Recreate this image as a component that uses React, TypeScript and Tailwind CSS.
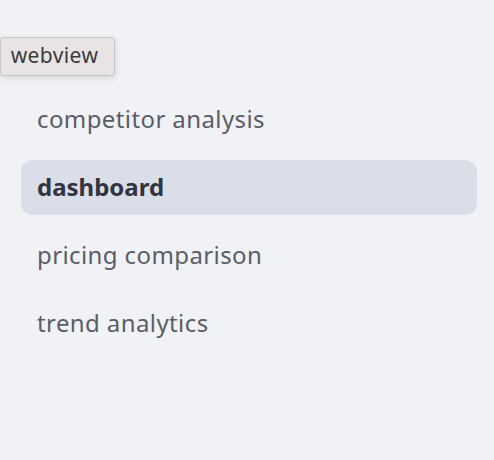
const ITEMS = [
  { label: "competitor analysis", active: false },
  { label: "dashboard", active: true },
  { label: "pricing comparison", active: false },
  { label: "trend analytics", active: false },
];

export default function App() {
  return (
    <div
      className="relative h-[460px] w-[494px] overflow-hidden bg-[#f0f2f6]"
      style={{ fontFamily: '"Noto Sans", "Open Sans", sans-serif' }}
    >
      <div className="absolute left-0 top-[37px] z-10 flex h-[39px] w-[115px] items-center justify-center rounded-[3px] border border-[#c9c5c8] bg-[#e8e4e6] pb-[1px] pr-[6px] text-[21px] tracking-[0.4px] text-[#3b3b3b] shadow-[0_2px_6px_rgba(0,0,0,0.12)]">
        webview
      </div>
      <nav className="flex flex-col gap-[13px] pl-[21px] pr-[17px] pt-[92px]">
        {ITEMS.map((item) => (
          <div
            key={item.label}
            className={
              item.active
                ? "flex h-[55px] items-center rounded-[12px] bg-[#dadee8] px-4 pb-[2px] text-[24px] font-bold text-[#31333f]"
                : "flex h-[55px] items-center rounded-[12px] px-4 pb-[2px] text-[24px] tracking-[0.4px] text-[#5b5d66]"
            }
          >
            {item.label}
          </div>
        ))}
      </nav>
    </div>
  );
}
